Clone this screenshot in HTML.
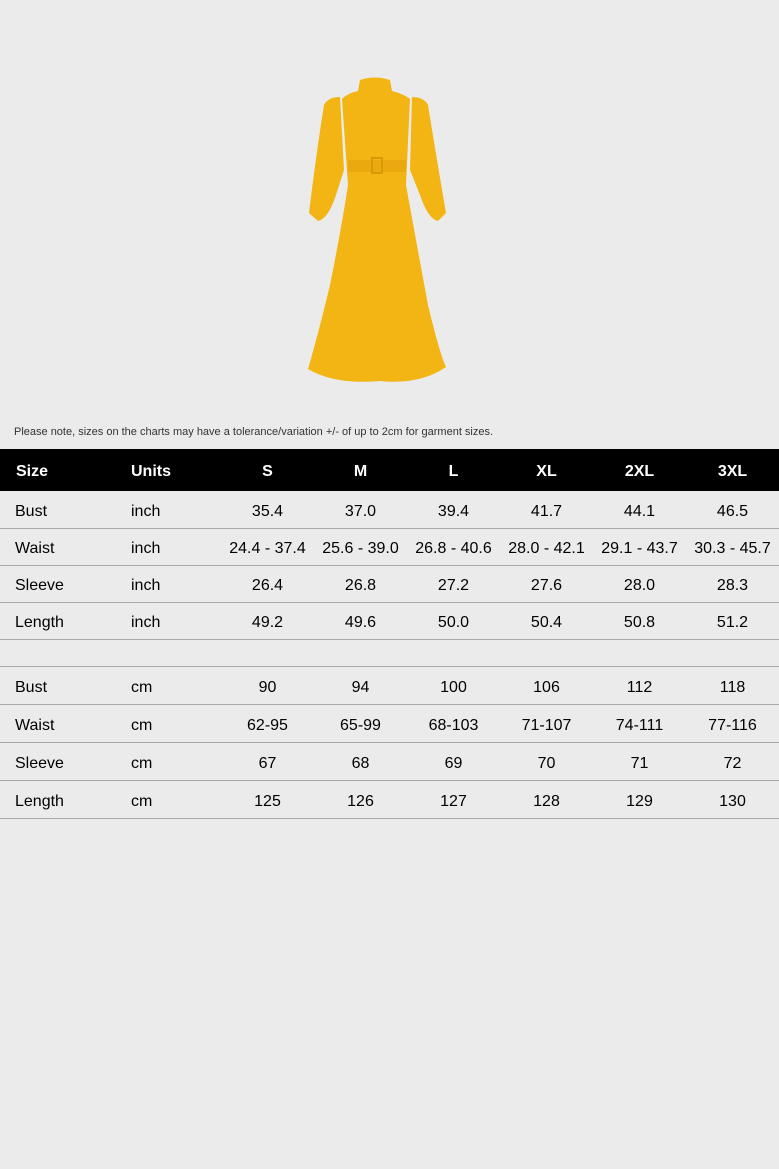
<!DOCTYPE html>
<html><head><meta charset="utf-8"><style>
body{margin:0;width:779px;height:1169px;background:#ebebeb;font-family:"Liberation Sans",Arial,sans-serif;position:relative;overflow:hidden}
.note{position:absolute;left:14px;top:426px;font-size:11px;color:#333}
.hdr{position:absolute;left:0;top:449px;width:779px;height:42px;background:#000;color:#fff;font-weight:bold;font-size:16px}
.row{position:absolute;left:0;width:779px;font-size:16px;color:#000;border-bottom:1px solid #a8a8a8;box-sizing:border-box}
.c{position:absolute;top:2px;height:100%;display:flex;align-items:center}
.hdr .c{top:2px}
.n{width:93px;justify-content:center;margin-left:-46px}
</style></head><body>
<svg style="position:absolute;left:300px;top:75px" width="160" height="312" viewBox="0 0 160 312">
<g fill="#f2b514">
<path d="M60 5 Q75 0 90 5 L92 16 Q104 19 110 24 L106 110 Q115 160 128 230 Q140 280 146 292 Q120 310 80 306 Q35 310 8 294 Q18 260 30 210 Q42 150 48 110 L42 24 Q48 18 58 16 Z"/>
<path d="M40 22 Q28 22 24 30 Q16 80 9 138 L18 146 Q28 144 36 120 L44 95 Z"/>
<path d="M112 22 Q124 22 128 30 Q136 80 146 138 L138 146 Q128 144 120 120 L110 95 Z"/>
</g>
<rect x="48" y="85" width="58" height="12" fill="#eaa90e"/>
<rect x="72" y="83" width="10" height="15" fill="none" stroke="#d89a08" stroke-width="2"/>
</svg>
<div class="note">Please note, sizes on the charts may have a tolerance/variation +/- of up to 2cm for garment sizes.</div>
<div class="hdr"><span class="c" style="left:16px">Size</span><span class="c" style="left:131px">Units</span>
<span class="c n" style="left:267px">S</span><span class="c n" style="left:360px">M</span><span class="c n" style="left:453px">L</span><span class="c n" style="left:546px">XL</span><span class="c n" style="left:639px">2XL</span><span class="c n" style="left:732px">3XL</span></div>

<div class="row" style="top:491px;height:38px"><span class="c" style="left:15px">Bust</span><span class="c" style="left:131px">inch</span><span class="c n" style="left:267px">35.4</span><span class="c n" style="left:360px">37.0</span><span class="c n" style="left:453px">39.4</span><span class="c n" style="left:546px">41.7</span><span class="c n" style="left:639px">44.1</span><span class="c n" style="left:732px">46.5</span></div>
<div class="row" style="top:529px;height:37px"><span class="c" style="left:15px">Waist</span><span class="c" style="left:131px">inch</span><span class="c n" style="left:267px">24.4&nbsp;-&nbsp;37.4</span><span class="c n" style="left:360px">25.6&nbsp;-&nbsp;39.0</span><span class="c n" style="left:453px">26.8&nbsp;-&nbsp;40.6</span><span class="c n" style="left:546px">28.0&nbsp;-&nbsp;42.1</span><span class="c n" style="left:639px">29.1&nbsp;-&nbsp;43.7</span><span class="c n" style="left:732px">30.3&nbsp;-&nbsp;45.7</span></div>
<div class="row" style="top:566px;height:37px"><span class="c" style="left:15px">Sleeve</span><span class="c" style="left:131px">inch</span><span class="c n" style="left:267px">26.4</span><span class="c n" style="left:360px">26.8</span><span class="c n" style="left:453px">27.2</span><span class="c n" style="left:546px">27.6</span><span class="c n" style="left:639px">28.0</span><span class="c n" style="left:732px">28.3</span></div>
<div class="row" style="top:603px;height:37px"><span class="c" style="left:15px">Length</span><span class="c" style="left:131px">inch</span><span class="c n" style="left:267px">49.2</span><span class="c n" style="left:360px">49.6</span><span class="c n" style="left:453px">50.0</span><span class="c n" style="left:546px">50.4</span><span class="c n" style="left:639px">50.8</span><span class="c n" style="left:732px">51.2</span></div>
<div class="row" style="top:640px;height:27px"></div>
<div class="row" style="top:667px;height:38px"><span class="c" style="left:15px">Bust</span><span class="c" style="left:131px">cm</span><span class="c n" style="left:267px">90</span><span class="c n" style="left:360px">94</span><span class="c n" style="left:453px">100</span><span class="c n" style="left:546px">106</span><span class="c n" style="left:639px">112</span><span class="c n" style="left:732px">118</span></div>
<div class="row" style="top:705px;height:38px"><span class="c" style="left:15px">Waist</span><span class="c" style="left:131px">cm</span><span class="c n" style="left:267px">62-95</span><span class="c n" style="left:360px">65-99</span><span class="c n" style="left:453px">68-103</span><span class="c n" style="left:546px">71-107</span><span class="c n" style="left:639px">74-111</span><span class="c n" style="left:732px">77-116</span></div>
<div class="row" style="top:743px;height:38px"><span class="c" style="left:15px">Sleeve</span><span class="c" style="left:131px">cm</span><span class="c n" style="left:267px">67</span><span class="c n" style="left:360px">68</span><span class="c n" style="left:453px">69</span><span class="c n" style="left:546px">70</span><span class="c n" style="left:639px">71</span><span class="c n" style="left:732px">72</span></div>
<div class="row" style="top:781px;height:38px"><span class="c" style="left:15px">Length</span><span class="c" style="left:131px">cm</span><span class="c n" style="left:267px">125</span><span class="c n" style="left:360px">126</span><span class="c n" style="left:453px">127</span><span class="c n" style="left:546px">128</span><span class="c n" style="left:639px">129</span><span class="c n" style="left:732px">130</span></div>
</body></html>
